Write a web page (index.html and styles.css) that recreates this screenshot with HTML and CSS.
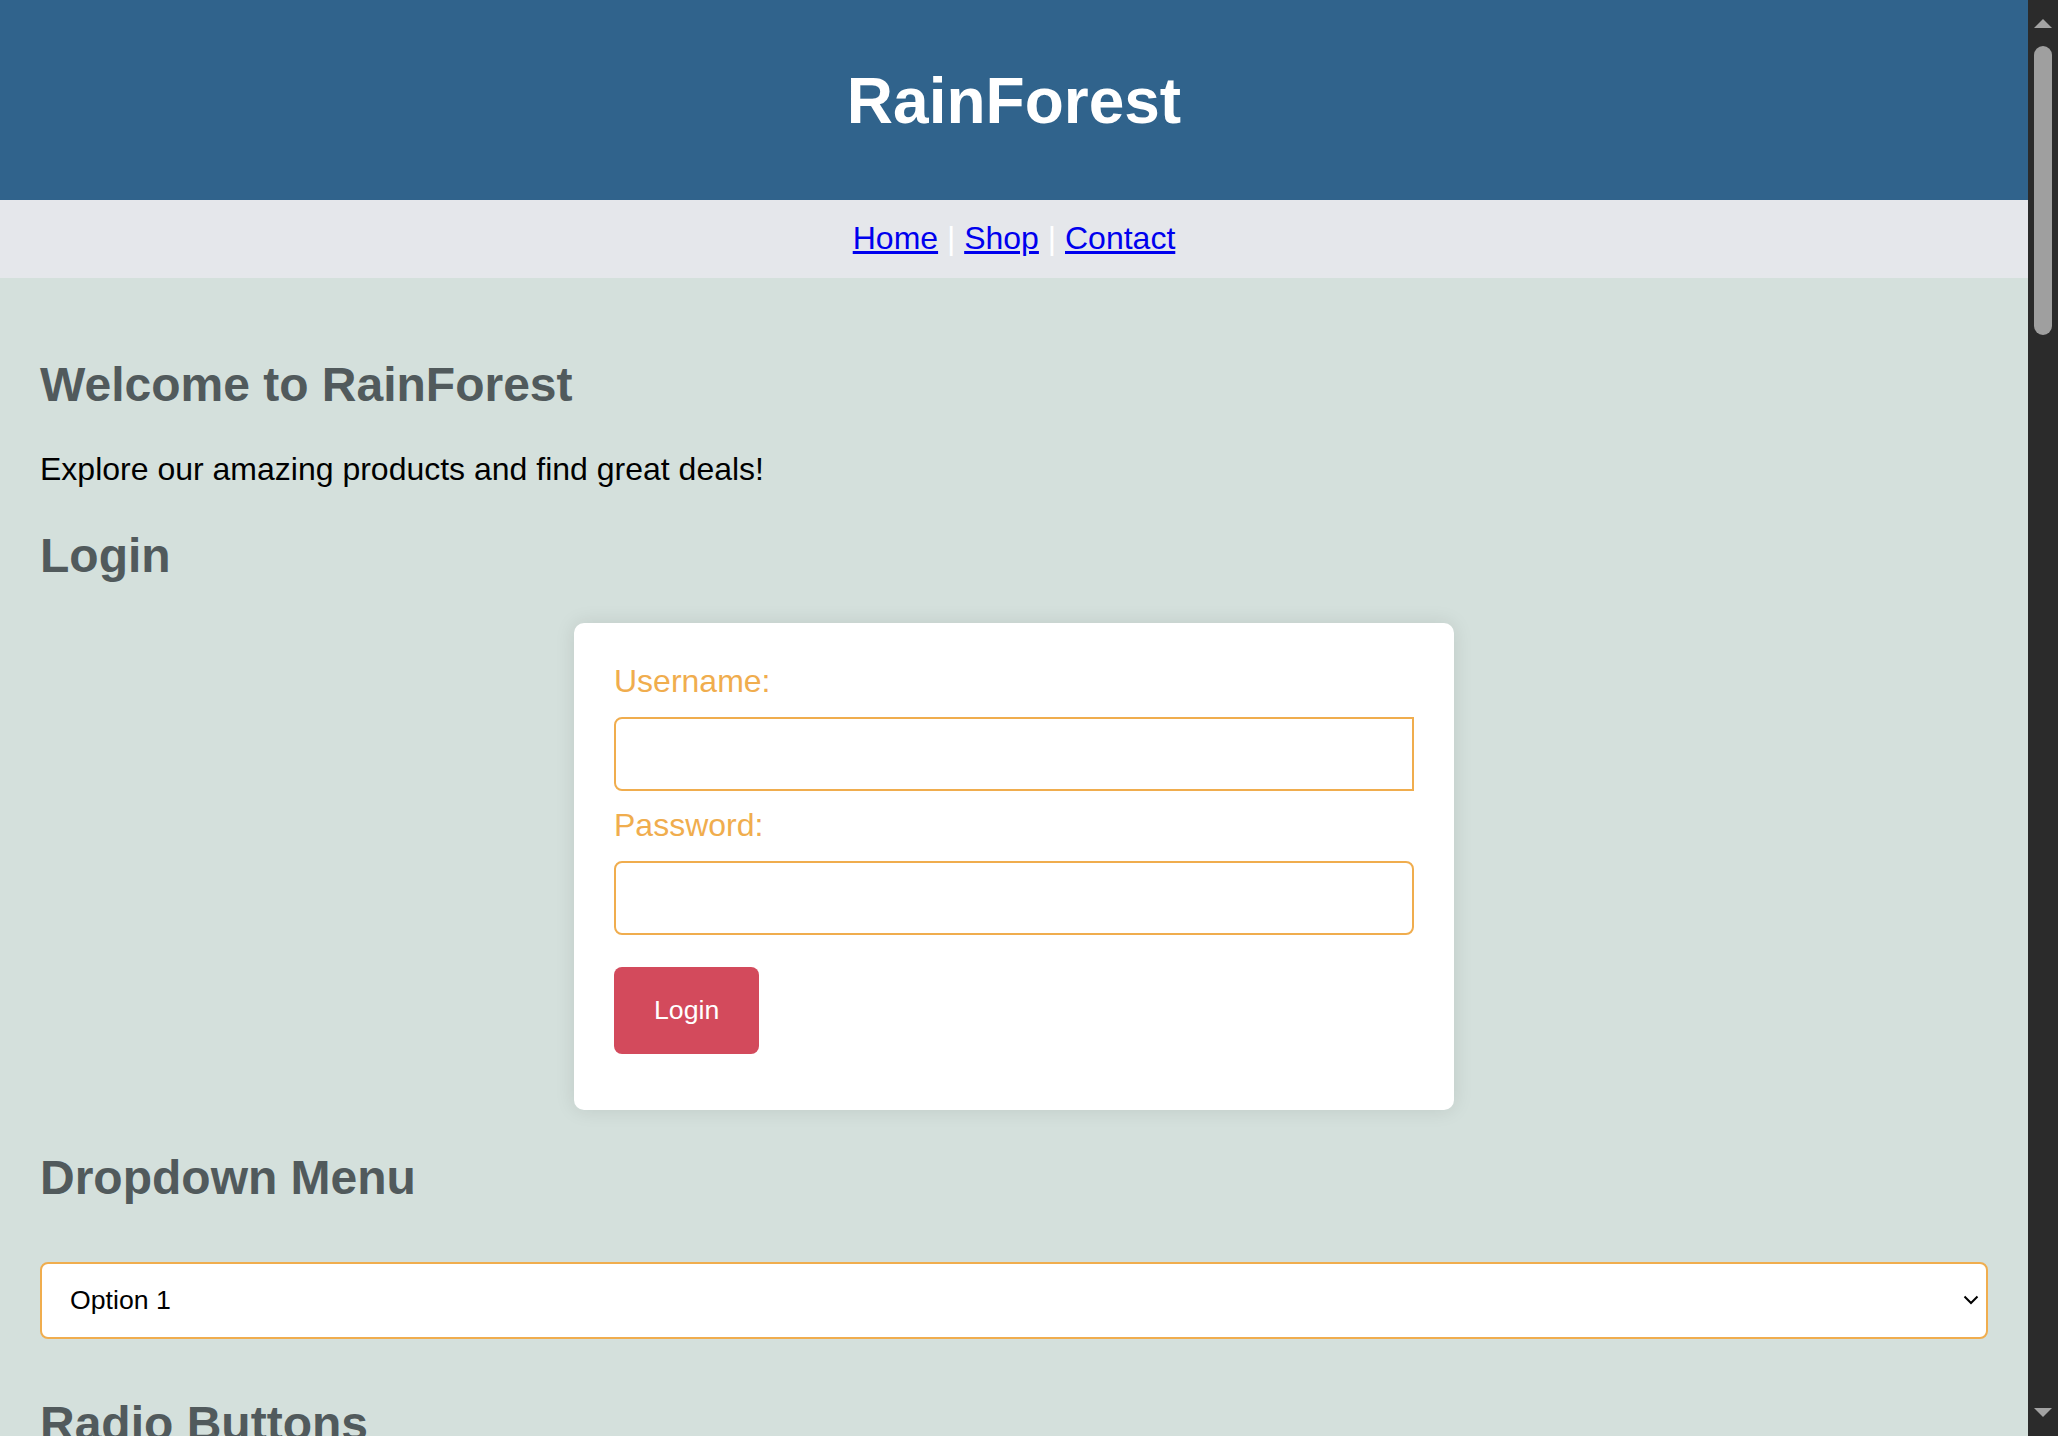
FILE: index.html
```html
<!DOCTYPE html>
<html lang="en">
<head>
<meta charset="utf-8">
<title>RainForest</title>
<link rel="stylesheet" href="styles.css">
</head>
<body>
<header class="site-header">
  <h1 class="site-title">RainForest</h1>
</header>
<nav class="site-nav">
  <a href="#" class="nav-link">Home</a> <span class="nav-sep">|</span> <a href="#" class="nav-link">Shop</a> <span class="nav-sep">|</span> <a href="#" class="nav-link">Contact</a>
</nav>
<main class="content">
  <h2 class="section-title intro-title">Welcome to RainForest</h2>
  <p class="intro-text">Explore our amazing products and find great deals!</p>

  <h2 class="section-title">Login</h2>
  <form class="login-card" onsubmit="return false;">
    <label class="field-label" for="username">Username:</label>
    <input class="field-input field-input--square-end" id="username" type="text">
    <label class="field-label" for="password">Password:</label>
    <input class="field-input" id="password" type="password">
    <button class="login-btn" type="submit">Login</button>
  </form>

  <h2 class="section-title">Dropdown Menu</h2>
  <div class="select-wrap">
    <select class="dropdown">
      <option>Option 1</option>
      <option>Option 2</option>
      <option>Option 3</option>
    </select>
    <svg class="select-arrow" width="16" height="10" viewBox="0 0 16 10" aria-hidden="true">
      <polyline points="1.5,1.5 8,8 14.5,1.5" fill="none" stroke="#000" stroke-width="2"/>
    </svg>
  </div>

  <h2 class="section-title">Radio Buttons</h2>
  <div class="choice-list">
    <label class="choice"><input type="radio" name="r" checked> Option A</label>
    <label class="choice"><input type="radio" name="r"> Option B</label>
    <label class="choice"><input type="radio" name="r"> Option C</label>
  </div>

  <h2 class="section-title">Checkboxes</h2>
  <div class="choice-list">
    <label class="choice"><input type="checkbox"> Subscribe to newsletter</label>
    <label class="choice"><input type="checkbox"> Accept terms and conditions</label>
  </div>

  <h2 class="section-title">Text Area</h2>
  <textarea class="text-area" rows="6"></textarea>

  <h2 class="section-title">Featured Products</h2>
  <div class="product-grid">
    <div class="product-card"><h3 class="product-name">Eco Bottle</h3><p class="product-price">$19.99</p></div>
    <div class="product-card"><h3 class="product-name">Bamboo Brush</h3><p class="product-price">$4.99</p></div>
    <div class="product-card"><h3 class="product-name">Canvas Bag</h3><p class="product-price">$12.49</p></div>
  </div>
</main>
<footer class="site-footer">&copy; 2024 RainForest. All rights reserved.</footer>

<div class="scrollbar" aria-hidden="true">
  <svg class="sb-arrow sb-up" width="18" height="9" viewBox="0 0 18 9"><polygon points="9,0 18,9 0,9" fill="#a3a3a3"/></svg>
  <div class="sb-thumb"></div>
  <svg class="sb-arrow sb-down" width="18" height="9" viewBox="0 0 18 9"><polygon points="0,0 18,0 9,9" fill="#a3a3a3"/></svg>
</div>
</body>
</html>
```

FILE: styles.css
```css
html {
  background: #d4e0dc;
  scrollbar-width: none;
}

body {
  margin: 0 30px 0 0;
  font-family: "Liberation Sans", Arial, sans-serif;
  background: #d4e0dc;
  color: #000;
}

.scrollbar {
  position: fixed;
  top: 0;
  right: 0;
  width: 30px;
  height: 100vh;
  background: #2b2b2b;
  display: flex;
  flex-direction: column;
  align-items: center;
}

.sb-arrow {
  display: block;
  flex: none;
}

.sb-up {
  margin-top: 19px;
}

.sb-thumb {
  flex: none;
  width: 18px;
  height: 289px;
  margin-top: 18px;
  border-radius: 9px;
  background: #9f9f9f;
}

.sb-down {
  margin-top: auto;
  margin-bottom: 19px;
}

.site-header {
  background: #30638c;
  padding: 64px 0 62px;
  text-align: center;
}

.site-title {
  margin: 0;
  font-size: 64px;
  line-height: 74px;
  font-weight: bold;
  color: #fff;
}

.site-nav {
  background: #e5e7eb;
  padding: 19px 0 21px;
  text-align: center;
  font-size: 32px;
  line-height: 38px;
}

.nav-link {
  color: #0000ee;
  text-decoration: underline;
}

.nav-sep {
  color: #fff;
}

.content {
  padding: 39px 40px 60px;
  min-height: 3900px;
}

.section-title {
  margin: 40px 0;
  font-size: 48px;
  font-weight: bold;
  color: #515a5c;
}

.intro-title {
  margin-bottom: 39px;
}

.intro-text {
  margin: 0 0 40px;
  font-size: 32px;
}

.login-card {
  box-sizing: border-box;
  width: 880px;
  margin: 0 auto;
  padding: 40px 40px 56px;
  background: #fff;
  border-radius: 10px;
  box-shadow: 0 0 20px rgba(0, 0, 0, 0.1);
}

.field-label {
  display: block;
  margin-bottom: 17px;
  font-size: 32px;
  color: #f0ad4e;
}

.field-input {
  display: block;
  box-sizing: border-box;
  width: 100%;
  height: 74px;
  margin: 0 0 16px;
  padding: 0 20px;
  border: 2px solid #f0ad4e;
  border-radius: 8px;
  background: #fff;
  font-family: "Liberation Sans", Arial, sans-serif;
  font-size: 26.67px;
  outline: none;
}

.field-input--square-end {
  border-top-right-radius: 0;
  border-bottom-right-radius: 0;
}

.login-btn {
  display: block;
  margin-top: 32px;
  padding: 28px 40px;
  border: none;
  border-radius: 8px;
  background: #d34a5c;
  color: #fff;
  font-family: "Liberation Sans", Arial, sans-serif;
  font-size: 26.67px;
  line-height: 30.67px;
  cursor: pointer;
}

.select-wrap {
  position: relative;
  margin: 57px 0;
}

.dropdown {
  display: block;
  box-sizing: border-box;
  width: 100%;
  height: 77px;
  padding: 0 60px 0 28px;
  border: 2px solid #f0ad4e;
  border-radius: 8px;
  background: #fff;
  color: #000;
  font-family: "Liberation Sans", Arial, sans-serif;
  font-size: 26.67px;
  -webkit-appearance: none;
  appearance: none;
}

.select-arrow {
  position: absolute;
  right: 9px;
  top: 50%;
  transform: translateY(-50%);
  pointer-events: none;
}

.choice-list {
  display: flex;
  flex-direction: column;
  gap: 20px;
}

.choice {
  display: flex;
  align-items: center;
  gap: 12px;
  font-size: 32px;
}

.choice input {
  width: 26px;
  height: 26px;
  margin: 0;
}

.text-area {
  display: block;
  box-sizing: border-box;
  width: 100%;
  padding: 20px;
  border: 2px solid #f0ad4e;
  border-radius: 8px;
  font-family: "Liberation Sans", Arial, sans-serif;
  font-size: 26.67px;
}

.product-grid {
  display: grid;
  grid-template-columns: repeat(3, 1fr);
  gap: 40px;
}

.product-card {
  padding: 40px;
  background: #fff;
  border-radius: 10px;
  box-shadow: 0 0 20px rgba(0, 0, 0, 0.1);
}

.product-name {
  margin: 0 0 20px;
  font-size: 37px;
  color: #515a5c;
}

.product-price {
  margin: 0;
  font-size: 32px;
  color: #d34a5c;
}

.site-footer {
  padding: 40px;
  background: #30638c;
  color: #fff;
  text-align: center;
  font-size: 28px;
}
```
